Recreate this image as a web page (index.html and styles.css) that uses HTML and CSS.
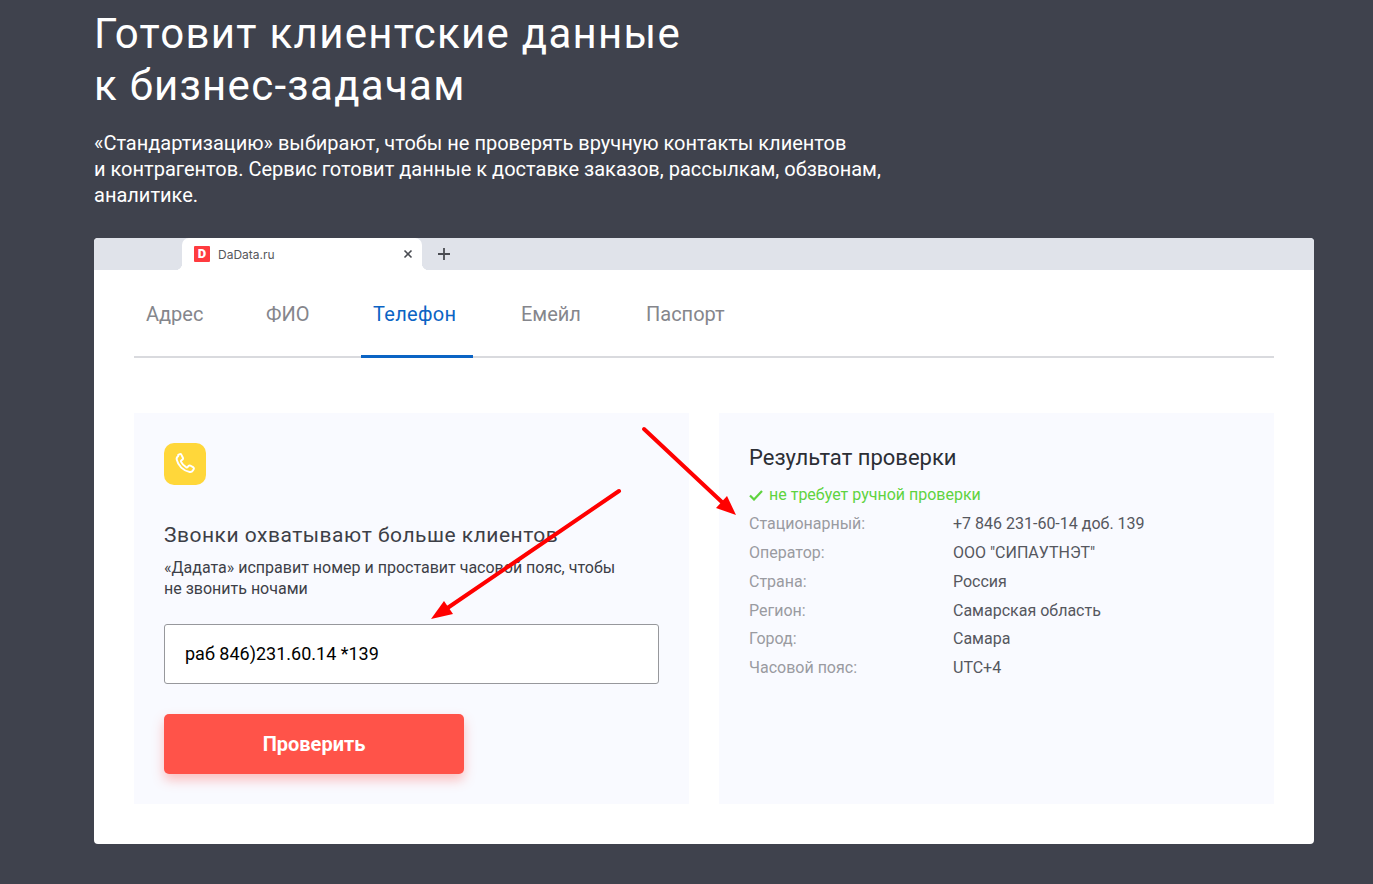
FILE: index.html
```html
<!DOCTYPE html>
<html lang="en">
<head>
    <meta charset="UTF-8">
    <meta name="viewport" content="width=device-width, initial-scale=1.0">
    <title>Стандартизация - DaData</title>
    <link rel="stylesheet" href="styles.css">
</head>
<body>

    <section class="promo">
        <h1>Готовит клиентские данные<br>к бизнес-задачам</h1>
        <p class="lead">«Стандартизацию» выбирают, чтобы не проверять вручную контакты клиентов<br>и контрагентов. Сервис готовит данные к доставке заказов, рассылкам, обзвонам,<br>аналитике.</p>

        <div class="browser">
            <!-- Browser tab strip -->
            <div class="tab-strip">
                <div class="tab">
                    <span class="favicon">D</span>
                    <span class="tab-title">DaData.ru</span>
                    <svg class="tab-close" width="10" height="10" viewBox="0 0 10 10"><path d="M1.5 1.5l7 7M8.5 1.5l-7 7" stroke="#4a4c52" stroke-width="1.6" fill="none"/></svg>
                </div>
                <svg class="tab-new" width="14" height="14" viewBox="0 0 14 14"><path d="M7 1v12M1 7h12" stroke="#4a4c52" stroke-width="1.8" fill="none"/></svg>
            </div>

            <div class="browser-body">
                <nav class="nav-tabs">
                    <a>Адрес</a>
                    <a>ФИО</a>
                    <a class="active">Телефон</a>
                    <a>Емейл</a>
                    <a>Паспорт</a>
                </nav>

                <div class="panels">
                    <div class="panel">
                        <div class="icon-box">
                            <svg width="25" height="25" viewBox="0 0 22 22"><path d="M4.6 2.6l1.5-.7c.5-.2 1 0 1.2.4l1.5 3c.2.4.1.9-.3 1.2l-1.3 1c-.3.2-.4.6-.2 1 .9 2 2.600 3.800 4.800 5 .4.200.800.100 1-.200l1.100-1.200c.3-.3.800-.4 1.200-.2l2.900 1.700c.4.300.6.800.3 1.300l-.8 1.400c-.6 1-1.700 1.500-2.800 1.300-5.800-1.100-10.200-5.600-11.400-10.800-.3-1.200.2-2.500 1.300-3.200z" stroke="#fff" stroke-width="1.700" fill="none" stroke-linejoin="round"/></svg>
                        </div>
                        <h3>Звонки охватывают больше клиентов</h3>
                        <p class="panel-text">«Дадата» исправит номер и проставит часовой пояс, чтобы<br>не звонить ночами</p>
                        <input class="phone-input" type="text" value="раб 846)231.60.14 *139">
                        <button class="submit-btn">Проверить</button>
                    </div>

                    <div class="panel">
                        <h3 class="result-title">Результат проверки</h3>
                        <div class="status">
                            <svg width="14" height="11" viewBox="0 0 14 11"><path d="M1 5.500l4 4 8-8.500" stroke="#5fd33f" stroke-width="2.200" fill="none"/></svg>
                            не требует ручной проверки
                        </div>
                        <dl class="result">
                            <dt>Стационарный:</dt><dd>+7 846 231-60-14 доб. 139</dd>
                            <dt>Оператор:</dt><dd>ООО "СИПАУТНЭТ"</dd>
                            <dt>Страна:</dt><dd>Россия</dd>
                            <dt>Регион:</dt><dd>Самарская область</dd>
                            <dt>Город:</dt><dd>Самара</dd>
                            <dt>Часовой пояс:</dt><dd>UTC+4</dd>
                        </dl>
                    </div>
                </div>
            </div>

            <!-- Red arrows drawn over the screenshot -->
            <svg class="arrows" width="1220" height="606" viewBox="0 0 1220 606">
                <path d="M550 191L630 266" stroke="#f00" stroke-width="4" stroke-linecap="round" fill="none"/>
                <path d="M642 277l-20-7 11-12z" fill="#f00"/>
                <path d="M525 253L352 371" stroke="#f00" stroke-width="4" stroke-linecap="round" fill="none"/>
                <path d="M337 381l13-18 9 13z" fill="#f00"/>
            </svg>
        </div>
    </section>

</body>
</html>
```

FILE: styles.css
```css
/* Global Styles */
body {
    font-family: Roboto, Arial, sans-serif;
    margin: 0;
    padding: 0;
    background-color: #3f424d;
    color: #333;
}

.promo {
    width: 1220px;
    margin-left: 94px;
    padding-bottom: 40px;
}

h1 {
    margin: 8px 0 0;
    font-size: 42px;
    font-weight: 400;
    letter-spacing: 1.3px;
    line-height: 52px;
    color: #fff;
}

.lead {
    margin: 18px 0 30px;
    font-size: 20px;
    line-height: 26px;
    color: #fff;
}

.browser {
    position: relative;
    background-color: #fff;
    border-radius: 4px;
    overflow: hidden;
}

.tab-strip {
    display: flex;
    align-items: center;
    height: 32px;
    padding-left: 88px;
    background-color: #e0e3ea;
}

.tab {
    position: relative;
    display: flex;
    align-items: center;
    align-self: stretch;
    width: 240px;
    box-sizing: border-box;
    padding: 0 9px 0 12px;
    background-color: #fff;
    border-radius: 7px 7px 0 0;
}

/* concave corners at the foot of the tab */
.tab::before,
.tab::after {
    content: "";
    position: absolute;
    bottom: 0;
    width: 7px;
    height: 7px;
}

.tab::before {
    left: -7px;
    background: radial-gradient(circle at 0 0, #e0e3ea 7px, #fff 7.500px);
}

.tab::after {
    right: -7px;
    background: radial-gradient(circle at 100% 0, #e0e3ea 7px, #fff 7.500px);
}

.favicon {
    width: 16px;
    height: 16px;
    background-color: #ff3b3f;
    border-radius: 1px;
    color: #fff;
    font-size: 13px;
    font-weight: 900;
    line-height: 16px;
    text-align: center;
}

.tab-title {
    flex: 1;
    margin-left: 8px;
    font-family: Inter, sans-serif;
    font-size: 12px;
    color: #55575c;
}

.tab-new {
    margin-left: 15px;
}

.browser-body {
    padding: 0 40px 40px;
}

.nav-tabs {
    display: grid;
    grid-template-columns: 79px 66px 107px 84px 102px;
    column-gap: 41px;
    height: 86px;
    border-bottom: 2px solid #d9dade;
}

.nav-tabs a {
    padding: 32px 12px 0;
    font-size: 20px;
    line-height: 24px;
    white-space: nowrap;
    color: #85868c;
}

.nav-tabs a.active {
    height: 53px;
    margin-right: -5px;
    letter-spacing: 0.3px;
    color: #0b64c4;
    border-bottom: 3px solid #0b64c4;
}

.panels {
    display: grid;
    grid-template-columns: 555px 555px;
    gap: 30px;
    margin-top: 55px;
}

.panel {
    height: 391px;
    box-sizing: border-box;
    padding: 30px;
    background-color: #f9faff;
}

.icon-box {
    display: flex;
    justify-content: center;
    align-items: center;
    width: 42px;
    height: 42px;
    background-color: #ffd73a;
    border-radius: 10px;
}

.panel h3 {
    margin: 36px 0 0;
    font-size: 21px;
    font-weight: 400;
    letter-spacing: 0.5px;
    line-height: 28px;
    color: #3d3f47;
}

.panel-text {
    margin: 8px 0 0;
    font-size: 16px;
    line-height: 21px;
    color: #3d3f47;
}

.phone-input {
    display: block;
    width: 495px;
    height: 60px;
    box-sizing: border-box;
    margin-top: 25px;
    padding: 0 20px 2px;
    background-color: #fff;
    border: 1px solid #97989c;
    border-radius: 3px;
    font-family: Roboto, Arial, sans-serif;
    font-size: 18px;
    color: #000;
}

.submit-btn {
    display: block;
    width: 300px;
    height: 60px;
    margin-top: 30px;
    background-color: #ff5349;
    border: none;
    border-radius: 5px;
    box-shadow: 0 6px 12px rgba(255, 83, 73, 0.35);
    font-family: Roboto, Arial, sans-serif;
    font-size: 20px;
    font-weight: 700;
    color: #fff;
}

.panel h3.result-title {
    margin: 1px 0 0;
    font-size: 22px;
    letter-spacing: 0;
    color: #2c2e35;
}

.status {
    display: flex;
    align-items: center;
    gap: 6px;
    margin-top: 13px;
    font-size: 16px;
    line-height: 20px;
    color: #5fd33f;
}

.result {
    display: grid;
    grid-template-columns: 204px 1fr;
    grid-auto-rows: 28.800px;
    margin: 5.300px 0 0;
    font-size: 16px;
    line-height: 28px;
}

.result dt {
    color: #9a9ba1;
}

.result dd {
    margin: 0;
    color: #55575e;
}

.arrows {
    position: absolute;
    top: 0;
    left: 0;
}
```
